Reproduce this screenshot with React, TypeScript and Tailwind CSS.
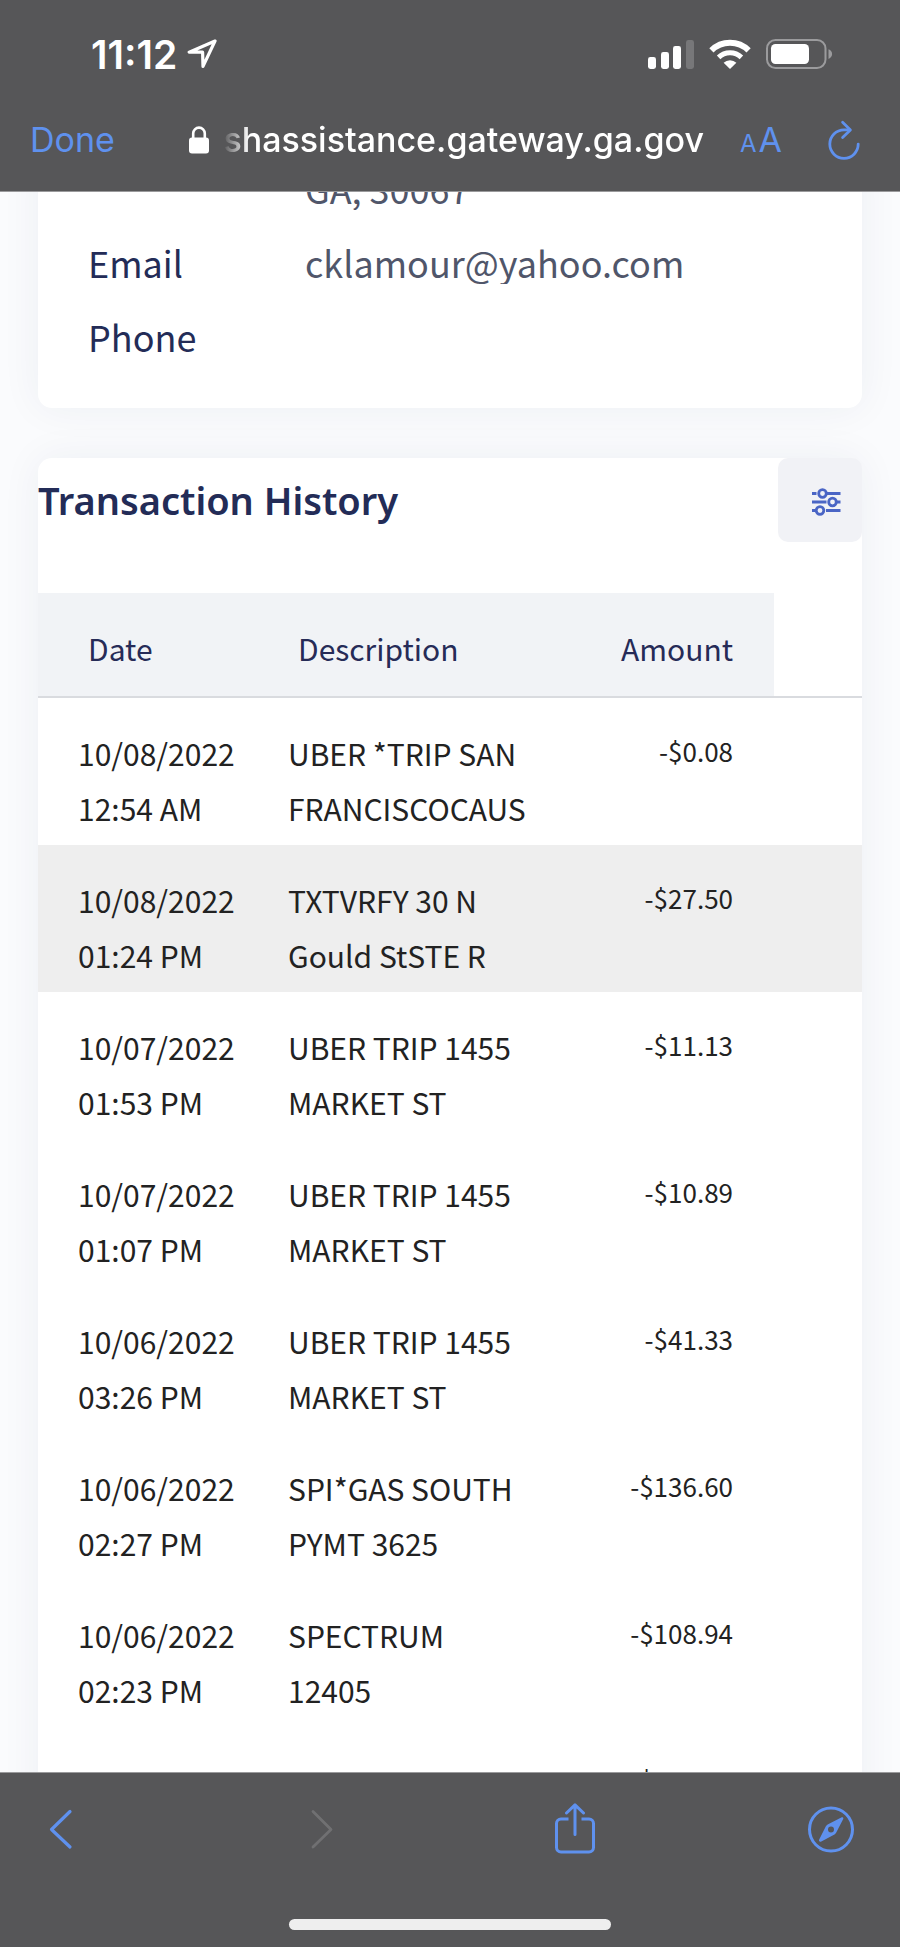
import React from "react";

const contact = [
  { label: "", value: "GA, 30067" },
  { label: "Email", value: "cklamour@yahoo.com" },
  { label: "Phone", value: "" },
];

const transactions = [
  { date: "10/08/2022", time: "12:54 AM", desc: ["UBER *TRIP SAN", "FRANCISCOCAUS"], amount: "-$0.08" },
  { date: "10/08/2022", time: "01:24 PM", desc: ["TXTVRFY 30 N", "Gould StSTE R"], amount: "-$27.50", active: true },
  { date: "10/07/2022", time: "01:53 PM", desc: ["UBER TRIP 1455", "MARKET ST"], amount: "-$11.13" },
  { date: "10/07/2022", time: "01:07 PM", desc: ["UBER TRIP 1455", "MARKET ST"], amount: "-$10.89" },
  { date: "10/06/2022", time: "03:26 PM", desc: ["UBER TRIP 1455", "MARKET ST"], amount: "-$41.33" },
  { date: "10/06/2022", time: "02:27 PM", desc: ["SPI*GAS SOUTH", "PYMT 3625"], amount: "-$136.60" },
  { date: "10/06/2022", time: "02:23 PM", desc: ["SPECTRUM", "12405"], amount: "-$108.94" },
  { date: "", time: "", desc: [], amount: "-$100.00" },
];

const StatusBar = () => (
  <div className="flex h-[108px] items-center justify-between pl-[91px] pr-[67px] text-white">
    <div className="flex items-center gap-[10px]">
      <span className="text-[39px] font-semibold leading-none">11:12</span>
      <svg className="h-[30px] w-[30px]" viewBox="0 0 30 30" fill="none" stroke="currentColor" strokeWidth="3.2" strokeLinejoin="round">
        <path d="M28 2 2.2 13.2h13.4l.4 14.2z" />
      </svg>
    </div>
    <div className="flex items-center gap-[15px]">
      <svg className="h-[30px] w-[46px]" viewBox="0 0 46 30" fill="currentColor">
        <rect x="0" y="18" width="8" height="12" rx="2.4" />
        <rect x="13" y="13" width="8" height="17" rx="2.4" />
        <rect x="25" y="7" width="8" height="23" rx="2.4" />
        <rect x="38" y="1" width="8" height="29" rx="2.4" opacity="0.2" />
      </svg>
      <svg className="h-[30px] w-[42px]" viewBox="0 0 42 30" fill="none" stroke="currentColor">
        <path d="M2.4 11.4a26.5 26.5 0 0 1 37.2 0" strokeWidth="6" />
        <path d="M9.6 18.4a16.4 16.4 0 0 1 22.8 0" strokeWidth="5" />
        <path d="M14.6 23.8a9.4 9.4 0 0 1 12.8 0L21 30z" fill="currentColor" stroke="none" />
      </svg>
      <svg className="h-[30px] w-[67px]" viewBox="0 0 67 30">
        <rect x="1" y="1" width="58.5" height="28" rx="8.5" fill="none" stroke="#9b9b9d" strokeWidth="2" />
        <rect x="5" y="5" width="38" height="20" rx="4.5" fill="currentColor" />
        <path d="M62.5 10.3c4.8 1.6 4.8 8 0 9.6z" fill="#9b9b9d" />
      </svg>
    </div>
  </div>
);

const AddressBar = () => (
  <div className="flex h-[64px] items-center pl-[30px] pr-[39px] text-[#5f91ee]">
    <button type="button" className="text-[34px] leading-none">Done</button>
    <div className="mr-[36px] flex min-w-0 flex-1 items-center justify-end gap-[14px] text-white">
      <svg className="h-[28px] w-[20px] shrink-0" viewBox="0 0 20 28">
        <path d="M4.2 13V7.4a5.8 5.8 0 0 1 11.6 0V13" fill="none" stroke="currentColor" strokeWidth="2.6" />
        <rect x="0" y="11.5" width="20" height="16" rx="3" fill="currentColor" />
      </svg>
      <span className="overflow-hidden whitespace-nowrap text-[34px] font-medium leading-[44px] [mask-image:linear-gradient(to_right,transparent,black_26px)]">
        shassistance.gateway.ga.gov
      </span>
    </div>
    <button type="button" aria-label="Text size" className="flex items-baseline gap-[2px] leading-none">
      <span className="text-[24px]">A</span>
      <span className="text-[34px]">A</span>
    </button>
    <button type="button" aria-label="Reload" className="ml-[45px]">
      <svg className="h-[40px] w-[34px]" viewBox="0 0 34 40" fill="none" stroke="currentColor" strokeWidth="2.8" strokeLinecap="round" strokeLinejoin="round">
        <path d="M22.5 9.9H17a14.2 14.2 0 1 0 14.2 14.2" />
        <path d="M15.6 2.2l7.8 7.7-7.8 7.7" />
      </svg>
    </button>
  </div>
);

const ContactCard = () => (
  <section className="-mt-[41px] rounded-[14px] bg-white pb-[35px] pl-[50px] pr-[41px] shadow-[0_0_40px_rgba(30,50,80,0.06)]">
    <dl>
      {contact.map((item) => (
        <div key={item.label} className="flex h-[74px] items-center text-[36px] leading-[44px]">
          <dt className="w-[217px] shrink-0 text-[#232c57]">{item.label}</dt>
          <dd className="overflow-hidden text-[#50566a]">{item.value}</dd>
        </div>
      ))}
    </dl>
  </section>
);

const FilterIcon = () => (
  <svg className="h-[28px] w-[30px]" viewBox="0 0 30 28" fill="none" stroke="#4a65c5" strokeWidth="2.8">
    <path d="M1 5.5h4.5M15.5 5.5h14M1 14h14.5M26 14h3.5M1 22.5h3M15 22.5h14.5" />
    <circle cx="11.5" cy="5.5" r="3.8" />
    <circle cx="21.5" cy="14" r="3.8" />
    <circle cx="9" cy="22.5" r="3.8" />
  </svg>
);

const TransactionHistory = () => (
  <section className="rounded-[14px] bg-white shadow-[0_0_40px_rgba(30,50,80,0.06)]">
    <div className="flex items-start justify-between pb-[51px]">
      <h2 className="font-['Noto_Sans',sans-serif] text-[38px] font-semibold leading-[84px] text-[#232c57]">
        Transaction History
      </h2>
      <button type="button" aria-label="Filter transactions" className="flex h-[84px] w-[84px] items-center justify-center rounded-[10px] bg-[#f1f2f6] pl-[12px] pt-[4px]">
        <FilterIcon />
      </button>
    </div>
    <table className="w-full table-fixed border-separate border-spacing-0 text-left">
      <thead>
        <tr className="h-[105px] text-[30px] text-[#262b57]">
          <th scope="col" className="w-[210px] border-b-2 border-[#d9dbdf] bg-[#f1f3f6] pl-[50px] pt-[7px] font-normal">Date</th>
          <th scope="col" className="border-b-2 border-[#d9dbdf] bg-[#f1f3f6] pl-[50px] pt-[7px] font-normal">Description</th>
          <th scope="col" className="w-[230px] border-b-2 border-[#d9dbdf] bg-[#f1f3f6] pr-[41px] pt-[7px] text-right font-normal">Amount</th>
          <td className="w-[88px] border-b-2 border-[#d9dbdf]" />
        </tr>
      </thead>
      <tbody>
        {transactions.map((t, index) => (
          <tr key={index} className={`h-[147px] align-top text-[30px] leading-[55px] text-[#222] ${t.active ? "bg-[#eee]" : ""}`}>
            <td className="whitespace-nowrap pl-[40px] pt-[28px]">
              {t.date}
              <br />
              {t.time}
            </td>
            <td className="whitespace-nowrap pl-[40px] pt-[28px]">
              {t.desc.map((line) => (
                <span key={line} className="block">{line}</span>
              ))}
            </td>
            <td className="pr-[41px] pt-[25px] text-right text-[26px]">{t.amount}</td>
            <td />
          </tr>
        ))}
      </tbody>
    </table>
  </section>
);

const Toolbar = () => (
  <footer className="flex h-[175px] shrink-0 flex-col items-center justify-between border-t border-[#9a9a9c] bg-[#565658] pb-[17px] text-[#5f91ee]">
    <nav className="flex h-[112px] w-full items-center justify-between pl-[37px] pr-[45px]">
      <button type="button" aria-label="Back">
        <svg className="h-[52px] w-[48px]" viewBox="0 0 48 52" fill="none" stroke="currentColor" strokeWidth="3.2" strokeLinecap="round" strokeLinejoin="round">
          <path d="M33 8.5 14.5 26.5 33 44" />
        </svg>
      </button>
      <button type="button" aria-label="Forward" disabled className="text-[#707072]">
        <svg className="h-[52px] w-[48px]" viewBox="0 0 48 52" fill="none" stroke="currentColor" strokeWidth="2.8" strokeLinecap="round" strokeLinejoin="round">
          <path d="M19 8.5 37 26.5 19 44" />
        </svg>
      </button>
      <button type="button" aria-label="Share">
        <svg className="h-[52px] w-[48px]" viewBox="0 0 48 52" fill="none" stroke="currentColor" strokeWidth="3" strokeLinecap="round" strokeLinejoin="round">
          <path d="M18.5 16H11a4.500 4.500 0 0 0-4.500 4.500v24a4.500 4.500 0 0 0 4.500 4.500h28a4.500 4.500 0 0 0 4.500-4.500v-24A4.500 4.500 0 0 0 39 16h-7.500" strokeLinecap="butt" />
          <path d="M25 31.500V2M16.500 10 25 1.800 33.500 10" />
        </svg>
      </button>
      <button type="button" aria-label="Open in Safari">
        <svg className="h-[52px] w-[48px]" viewBox="0 0 48 52" fill="none" stroke="currentColor" strokeWidth="3">
          <circle cx="24" cy="26.5" r="21.5" />
          <path fillRule="evenodd" fill="currentColor" stroke="none" d="M36 14.600c.5.500.4 1.100.1 1.700L29 30l-1.500 1.600-13.200 6.900c-1.600.8-2.900-.4-2.100-2L19 23l1.600-1.500 13.700-7.100c.6-.3 1.200-.3 1.700.2zM24 23.500a3 3 0 1 0 0 6 3 3 0 0 0 0-6z" />
        </svg>
      </button>
    </nav>
    <div className="h-[11px] w-[322px] rounded-full bg-[#eee]" />
  </footer>
);

export default function App() {
  return (
    <div className="flex h-screen flex-col overflow-hidden bg-[#fafbfd] font-['Noto_Sans_CJK_SC',sans-serif]">
      <header className="relative z-10 shrink-0 border-b border-[#9a9a9c] bg-[#565658] pb-[19px] font-['Inter',sans-serif]">
        <StatusBar />
        <AddressBar />
      </header>
      <main className="flex min-h-0 flex-1 flex-col gap-[50px] overflow-hidden px-[38px]">
        <ContactCard />
        <TransactionHistory />
      </main>
      <Toolbar />
    </div>
  );
}
